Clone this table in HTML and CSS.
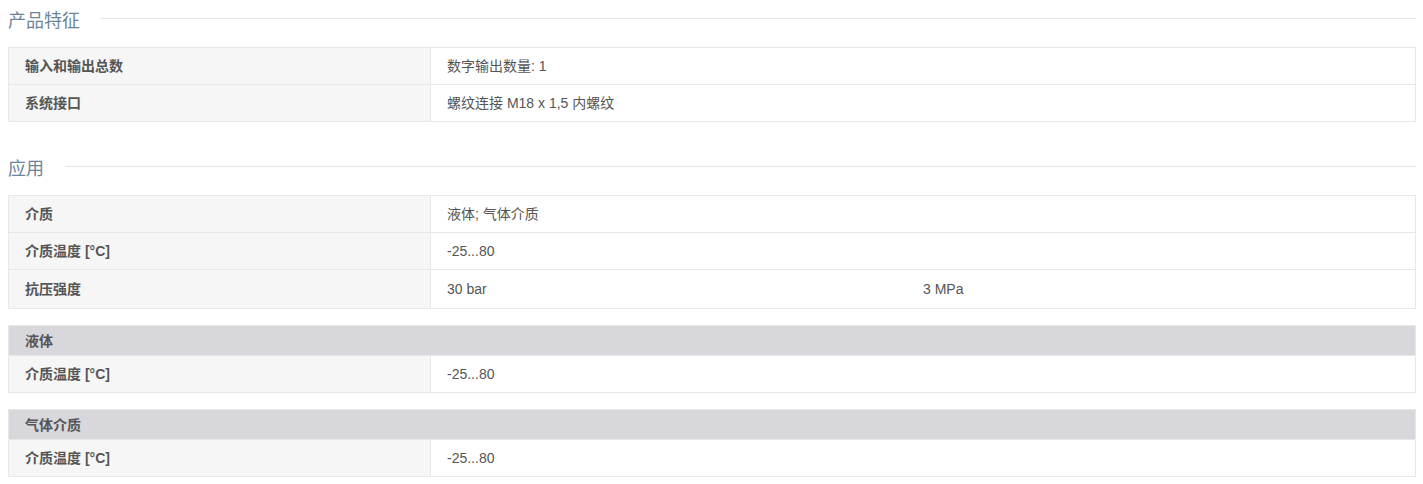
FILE: index.html
```html
<!DOCTYPE html>
<html lang="zh">
<head>
<meta charset="utf-8">
<title>产品特征</title>
<link rel="stylesheet" href="styles.css">
</head>
<body>
<section class="section">
  <h2 class="section-title"><span>产品特征</span></h2>
  <table class="spec">
    <tr><th>输入和输出总数</th><td>数字输出数量: 1</td></tr>
    <tr><th>系统接口</th><td>螺纹连接 M18 x 1,5 内螺纹</td></tr>
  </table>
</section>
<section class="section">
  <h2 class="section-title"><span>应用</span></h2>
  <table class="spec">
    <tr><th>介质</th><td>液体; 气体介质</td></tr>
    <tr><th>介质温度 [°C]</th><td>-25...80</td></tr>
    <tr class="tall"><th>抗压强度</th><td><div class="split"><span class="split-a">30 bar</span><span>3 MPa</span></div></td></tr>
  </table>
  <table class="spec group">
    <tr class="group-head"><th colspan="2">液体</th></tr>
    <tr><th>介质温度 [°C]</th><td>-25...80</td></tr>
  </table>
  <table class="spec group">
    <tr class="group-head"><th colspan="2">气体介质</th></tr>
    <tr><th>介质温度 [°C]</th><td>-25...80</td></tr>
  </table>
</section>
</body>
</html>
```

FILE: styles.css
```css
html, body {
  margin: 0;
  background: #fff;
}
body {
  padding: 6px 7px 0 8px;
  font-family: "Liberation Sans", Arial, "Noto Sans CJK SC", sans-serif;
  font-size: 14px;
  color: #555;
}
.section {
  margin-bottom: 32px;
}
.section-title {
  display: flex;
  align-items: center;
  margin: 0 0 15px;
  font-size: 18px;
  line-height: 26px;
  font-weight: normal;
  color: #6c8598;
  font-family: "Noto Sans CJK SC", sans-serif;
}
.section-title::after {
  content: "";
  flex: 1;
  height: 1px;
  background: #e3e5e8;
  margin-left: 21px;
  margin-top: -1px;
}
.spec {
  width: 100%;
  border-collapse: collapse;
  border: 1px solid #e8e8e8;
}
.spec + .spec {
  margin-top: 16px;
}
.spec th,
.spec td {
  border-top: 1px solid #e8e8e8;
  height: 36px;
  padding: 0 16px;
  text-align: left;
  vertical-align: middle;
  line-height: 16px;
}
.spec th {
  width: 389px;
  background: #f6f6f6;
  font-weight: bold;
  color: #555;
  border-right: 1px solid #e8e8e8;
}
.spec td {
  background: #fff;
  color: #555;
}
.spec .tall th,
.spec .tall td {
  height: 38px;
}
.split {
  display: flex;
}
.split-a {
  width: 476px;
}
.spec .group-head th {
  background: #d8d7dc;
  height: 29px;
  border: none;
}
```
